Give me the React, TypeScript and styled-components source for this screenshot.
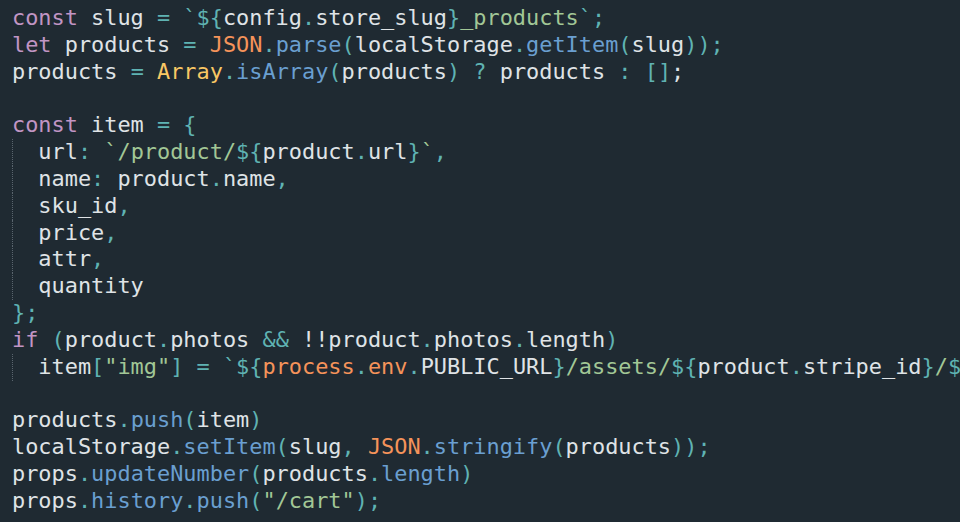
import React from "react";
import styled, { createGlobalStyle } from "styled-components";

const Global = createGlobalStyle`
  html, body { margin: 0; padding: 0; background: #1f2a32; }
  body { width: 960px; height: 522px; overflow: hidden; }
`;

type Kind = "t" | "k" | "p" | "s" | "o" | "y" | "f";

const colors: Record<Kind, string> = {
  t: "#dfe3e6",
  k: "#c195c4",
  p: "#5fb3b3",
  s: "#a2c796",
  o: "#f5935a",
  y: "#f9c764",
  f: "#6a9fd0",
};

const Editor = styled.div`
  background: #1f2a32;
  width: 960px;
  height: 522px;
  overflow: hidden;
  padding: 5px 0 0 12px;
  box-sizing: border-box;
  font-family: "DejaVu Sans Mono", "Liberation Mono", monospace;
  font-size: 21.9px;
  line-height: 26.83px;
  color: #dfe3e6;
`;

const Line = styled.div`
  position: relative;
  white-space: pre;
  height: 26.83px;
`;

const Guide = styled.span`
  position: absolute;
  left: 0;
  top: 0;
  bottom: 0;
  width: 0;
  border-left: 1px dotted #5a656e;
`;

const Tok = styled.span<{ $k: Kind }>`
  color: ${(p) => colors[p.$k]};
`;

type T = [string, Kind];
const lines: { guide?: boolean; toks: T[] }[] = [
  { toks: [["const", "k"], [" slug ", "t"], ["=", "p"], [" ", "t"], ["`${", "p"], ["config", "t"], [".", "p"], ["store_slug", "t"], ["}", "p"], ["_products", "s"], ["`;", "p"]] },
  { toks: [["let", "k"], [" products ", "t"], ["=", "p"], [" ", "t"], ["JSON", "o"], [".", "p"], ["parse", "f"], ["(", "p"], ["localStorage", "t"], [".", "p"], ["getItem", "f"], ["(", "p"], ["slug", "t"], ["));", "p"]] },
  { toks: [["products ", "t"], ["=", "p"], [" ", "t"], ["Array", "y"], [".", "p"], ["isArray", "f"], ["(", "p"], ["products", "t"], [")", "p"], [" ", "t"], ["?", "p"], [" products ", "t"], [":", "p"], [" ", "t"], ["[]", "p"], [";", "t"]] },
  { toks: [[" ", "t"]] },
  { toks: [["const", "k"], [" item ", "t"], ["=", "p"], [" ", "t"], ["{", "p"]] },
  { guide: true, toks: [["  url", "t"], [":", "p"], [" ", "t"], ["`/product/", "s"], ["${", "p"], ["product", "t"], [".", "p"], ["url", "t"], ["}", "p"], ["`", "s"], [",", "p"]] },
  { guide: true, toks: [["  name", "t"], [":", "p"], [" product", "t"], [".", "p"], ["name", "t"], [",", "p"]] },
  { guide: true, toks: [["  sku_id", "t"], [",", "p"]] },
  { guide: true, toks: [["  price", "t"], [",", "p"]] },
  { guide: true, toks: [["  attr", "t"], [",", "p"]] },
  { guide: true, toks: [["  quantity", "t"]] },
  { toks: [["};", "p"]] },
  { toks: [["if", "k"], [" ", "t"], ["(", "p"], ["product", "t"], [".", "p"], ["photos ", "t"], ["&&", "p"], [" !!product", "t"], [".", "p"], ["photos", "t"], [".", "p"], ["length", "t"], [")", "p"]] },
  { guide: true, toks: [["  item", "t"], ["[", "p"], ["\"img\"", "s"], ["]", "p"], [" ", "t"], ["=", "p"], [" ", "t"], ["`${", "p"], ["process", "o"], [".", "p"], ["env", "o"], [".", "p"], ["PUBLIC_URL", "t"], ["}", "p"], ["/assets/", "s"], ["${", "p"], ["product", "t"], [".", "p"], ["stripe_id", "t"], ["}", "p"], ["/", "s"], ["${", "p"], ["product", "t"], [".", "p"], ["photos", "t"], ["[0]}", "p"]] },
  { toks: [[" ", "t"]] },
  { toks: [["products", "t"], [".", "p"], ["push", "f"], ["(", "p"], ["item", "t"], [")", "p"]] },
  { toks: [["localStorage", "t"], [".", "p"], ["setItem", "f"], ["(", "p"], ["slug", "t"], [",", "p"], [" ", "t"], ["JSON", "o"], [".", "p"], ["stringify", "f"], ["(", "p"], ["products", "t"], ["));", "p"]] },
  { toks: [["props", "t"], [".", "p"], ["updateNumber", "f"], ["(", "p"], ["products", "t"], [".", "p"], ["length", "f"], [")", "p"]] },
  { toks: [["props", "t"], [".", "p"], ["history", "f"], [".", "p"], ["push", "f"], ["(", "p"], ["\"/cart\"", "s"], [");", "p"]] },
];

export default function App() {
  return (
    <>
      <Global />
      <Editor>
        {lines.map((l, i) => (
          <Line key={i}>
            {l.guide && <Guide />}
            {l.toks.map(([text, k], j) => (
              <Tok key={j} $k={k}>
                {text}
              </Tok>
            ))}
          </Line>
        ))}
      </Editor>
    </>
  );
}
